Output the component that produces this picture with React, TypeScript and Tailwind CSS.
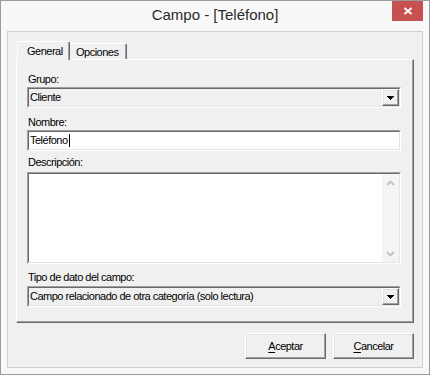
import React from 'react'

// classic Win32 bevels
const sunken =
  'border border-t-[#a0a0a0] border-l-[#a0a0a0] border-r-white border-b-white'
const sunkenInner =
  'border border-t-[#696969] border-l-[#696969] border-r-[#e3e3e3] border-b-[#e3e3e3]'
const raised =
  'border border-t-white border-l-white border-r-[#696969] border-b-[#696969] shadow-[inset_-1px_-1px_0_#a0a0a0,inset_1px_1px_0_#e3e3e3]'

function DownArrow() {
  return (
    <svg width="7" height="4" viewBox="0 0 7 4" shapeRendering="crispEdges">
      <rect x="0" y="0" width="7" height="1" fill="#000" />
      <rect x="1" y="1" width="5" height="1" fill="#000" />
      <rect x="2" y="2" width="3" height="1" fill="#000" />
      <rect x="3" y="3" width="1" height="1" fill="#000" />
    </svg>
  )
}

function Chevron({ up }: { up?: boolean }) {
  return (
    <svg width="9" height="6" viewBox="0 0 9 6">
      <polyline
        points={up ? '1,5 4.5,1.5 8,5' : '1,1 4.5,4.5 8,1'}
        fill="none"
        stroke="#c2c2c2"
        strokeWidth="1.8"
      />
    </svg>
  )
}

function Label({ text, className = '' }: { text: string; className?: string }) {
  return <div className={`h-[13px] leading-[13px] pl-[1px] ${className}`}>{text}</div>
}

function Combo({ value, className = '' }: { value: string; className?: string }) {
  return (
    <div className={`h-[21px] flex ${sunken} ${className}`}>
      <div className={`flex-1 flex bg-[#f0f0f0] ${sunkenInner}`}>
        <span className="flex-1 pl-[1px] leading-[17px] whitespace-nowrap overflow-hidden">{value}</span>
        <div className={`w-[17px] h-full flex items-center justify-center bg-[#f0f0f0] ${raised}`}>
          <DownArrow />
        </div>
      </div>
    </div>
  )
}

function PushButton({ first, rest }: { first: string; rest: string }) {
  return (
    <button className={`w-[81px] h-[26px] bg-[#f0f0f0] text-black leading-[13px] ${raised}`}>
      <span className="underline underline-offset-2">{first}</span>
      {rest}
    </button>
  )
}

export default function App() {
  return (
    <div className="w-[430px] h-[375px] bg-[#f8f8f8] border border-[#9c9c9c] flex flex-col relative font-['Liberation_Sans',Arial,sans-serif] text-[11px] tracking-[-0.5px] text-black">
      {/* Title bar */}
      <div className="h-[30px] flex items-center justify-center pb-[1px]">
        <span className="text-[15px] tracking-normal text-[#2b2b2b]">Campo - [Teléfono]</span>
      </div>
      <div className="absolute top-0 right-[6px] w-[31px] h-[20px] bg-[#c75050] flex items-center justify-center">
        <svg width="10" height="8" viewBox="0 0 10 8">
          <path d="M1.5 1 L8.5 7 M8.5 1 L1.5 7" stroke="#fff" strokeWidth="1.8" />
        </svg>
      </div>

      {/* Client area */}
      <div className="mx-[6px] h-[337px] bg-[#f0f0f0] border border-[#d0d0d0] pt-[9px] px-[8px] flex flex-col">
        {/* Tabs */}
        <div className="h-[18px] flex items-start pl-[1px]">
          <div className="relative z-10 w-[53px] h-[19px] bg-[#f0f0f0] border-t border-l border-r border-t-white border-l-white border-r-[#696969] shadow-[inset_-1px_0_0_#a0a0a0] rounded-t-[2px] pl-[9px] pt-[3px] leading-[13px]">
            General
          </div>
          <div className="mt-[2px] w-[57px] h-[16px] border-t border-r border-t-white border-r-[#696969] shadow-[inset_-1px_0_0_#a0a0a0] rounded-tr-[2px] pl-[6px] pt-[2px] leading-[13px]">
            Opciones
          </div>
        </div>

        {/* Panel */}
        <div className="h-[264px] border border-t-white border-l-white border-r-[#696969] border-b-[#696969] shadow-[inset_-1px_-1px_0_#a0a0a0] pt-[13px] pl-[10px] pr-[12px] flex flex-col">
          <Label text="Grupo:" />
          <Combo value="Cliente" className="mt-[1px]" />

          <Label text="Nombre:" className="mt-[8px]" />
          <div className={`mt-[1px] h-[21px] flex ${sunken}`}>
            <div className={`flex-1 bg-white flex items-center pl-[1px] ${sunkenInner}`}>
              <span className="leading-[17px]">Teléfono</span>
              <span className="w-[1px] h-[13px] bg-black ml-[1px]" />
            </div>
          </div>

          <Label text="Descripción:" className="mt-[5px]" />
          <div className={`mt-[3px] h-[92px] flex ${sunken}`}>
            <div className={`flex-1 bg-white flex justify-end ${sunkenInner}`}>
              <div className="w-[17px] h-full bg-[#f4f4f4] flex flex-col justify-between">
                <div className="h-[17px] flex items-center justify-center">
                  <Chevron up />
                </div>
                <div className="h-[17px] flex items-center justify-center">
                  <Chevron />
                </div>
              </div>
            </div>
          </div>

          <Label text="Tipo de dato del campo:" className="mt-[7px]" />
          <Combo value="Campo relacionado de otra categoría (solo lectura)" className="mt-[2px]" />
        </div>

        {/* Buttons */}
        <div className="mt-[10px] flex justify-end gap-[7px]">
          <PushButton first="A" rest="ceptar" />
          <PushButton first="C" rest="ancelar" />
        </div>
      </div>
    </div>
  )
}
